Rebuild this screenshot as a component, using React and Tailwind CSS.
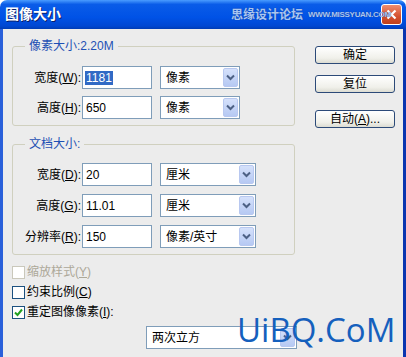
import React from "react";

const font = "font-['Liberation_Sans','Noto_Sans_CJK_SC',sans-serif]";

const Chevron = () => (
  <svg width="9" height="7" viewBox="0 0 9 7" aria-hidden="true">
    <path d="M1 1.5 L4.5 5 L8 1.5" fill="none" stroke="#4d6185" strokeWidth="2" />
  </svg>
);

const Select = ({ width, value }) => (
  <div className={`flex h-[23px] items-center border border-[#7f9db9] bg-white ${width}`}>
    <span className="flex-1 pl-[5px] text-[12px] leading-none text-black">{value}</span>
    <div className="mr-[1px] flex h-[19px] w-[15px] items-center justify-center rounded-[2px] border border-[#b8c8f0] bg-[linear-gradient(to_bottom,#d5e1fb,#b6c9f3)]">
      <Chevron />
    </div>
  </div>
);

const Label = ({ text, keyChar }) => (
  <span className="w-[68px] whitespace-nowrap text-right text-[12px] text-black">
    {text}(<span className="underline">{keyChar}</span>):
  </span>
);

const Row = ({ text, keyChar, value, unit, selectWidth, selected }) => (
  <div className="flex items-center">
    <Label text={text} keyChar={keyChar} />
    <div className="ml-[1px] flex h-[23px] w-[70px] items-center border border-[#7f9db9] bg-white pl-[2px] text-[12px] text-black">
      {selected ? (
        <span className="bg-[#316ac5] px-[1px] leading-[14px] text-white">{value}</span>
      ) : (
        <span className="px-[1px]">{value}</span>
      )}
    </div>
    <div className="ml-[8px]">
      <Select width={selectWidth} value={unit} />
    </div>
  </div>
);

const Group = ({ title, className, children }) => (
  <fieldset className={`w-[283px] rounded-[3px] border border-[#d0d0bf] ${className}`}>
    <legend className="ml-[12px] px-[4px] text-[12px] leading-[14px] text-[#1e50b4]">{title}</legend>
    {children}
  </fieldset>
);

const Button = ({ children, className }) => (
  <button
    type="button"
    className={`flex h-[18px] w-[80px] items-center justify-center rounded-[3px] border border-[#2c4a78] bg-[linear-gradient(to_bottom,#ffffff,#f0f0ea_70%,#dcdcd2)] text-[12px] leading-none text-black ${className}`}
  >
    {children}
  </button>
);

const Check = ({ label, keyChar, checked, disabled, colon }) => (
  <div className="flex h-[20px] items-center">
    <div
      className={`flex h-[13px] w-[13px] items-center justify-center border bg-white ${
        disabled ? "border-[#cac8bb]" : "border-[#1c5180]"
      }`}
    >
      {checked && (
        <svg width="9" height="9" viewBox="0 0 9 9" aria-hidden="true">
          <path d="M1 4.5 L3.5 7 L8 1.5" fill="none" stroke="#21a121" strokeWidth="2" />
        </svg>
      )}
    </div>
    <span className={`ml-[2px] text-[12px] ${disabled ? "text-[#aca899]" : "text-black"}`}>
      {label}(<span className="underline">{keyChar}</span>){colon ? ":" : ""}
    </span>
  </div>
);

export default function App() {
  return (
    <div className={`flex h-[357px] w-[406px] flex-col overflow-hidden ${font}`}>
      <div className="relative flex h-[29px] w-[406px] shrink-0 items-center rounded-t-[7px] bg-[linear-gradient(to_bottom,#4a9cff_0%,#0a5ce8_15%,#0052e6_60%,#0047d2_90%,#003cb4_100%)] pl-[5px] pr-[4px]">
        <span className="text-[14px] font-bold text-white [text-shadow:1px_1px_0_#0a1e6a]">图像大小</span>
        {/* close button */}
        <div className="ml-auto flex h-[21px] w-[21px] shrink-0 items-center justify-center rounded-[3px] border border-white bg-[linear-gradient(to_bottom,#ee8d6f,#d4512e_60%,#c0401c)]">
          <svg width="11" height="11" viewBox="0 0 11 11" aria-hidden="true">
            <path d="M1.5 1.5 L9.5 9.5 M9.5 1.5 L1.5 9.5" stroke="#ffffff" strokeWidth="2.2" />
          </svg>
        </div>
        {/* site watermark drawn over the bar */}
        <span className="absolute left-[231px] top-[8px] z-10 text-[12px] font-bold leading-[14px] text-[#a9c6f2] [text-shadow:0_0_1px_#1b3a8a]">
          思缘设计论坛
        </span>
        <span className="absolute left-[308px] top-[10px] z-10 whitespace-nowrap text-[8px] font-bold leading-[10px] tracking-[-0.3px] text-[#a9c6f2] [text-shadow:0_0_1px_#1b3a8a]">
          WWW.MISSYUAN.COM
        </span>
      </div>

      <div className="relative flex flex-1 border-l-[3px] border-r-[3px] border-l-[#2a60da] border-r-[#0a35b0] bg-[#ececec]">
        <div className="flex flex-col pl-[9px] pt-[10px]">
          <Group title="像素大小:2.20M" className="pb-[6px] pt-[13px]">
            <div className="flex flex-col gap-[7px]">
              <Row text="宽度" keyChar="W" value="1181" unit="像素" selectWidth="w-[80px]" selected />
              <Row text="高度" keyChar="H" value="650" unit="像素" selectWidth="w-[80px]" />
            </div>
          </Group>

          <Group title="文档大小:" className="mt-[11px] pb-[6px] pt-[12px]">
            <div className="flex flex-col gap-[8px]">
              <Row text="宽度" keyChar="D" value="20" unit="厘米" selectWidth="w-[96px]" />
              <Row text="高度" keyChar="G" value="11.01" unit="厘米" selectWidth="w-[96px]" />
              <Row text="分辨率" keyChar="R" value="150" unit="像素/英寸" selectWidth="w-[96px]" />
            </div>
          </Group>

          <div className="mt-[7px] flex flex-col">
            <Check label="缩放样式" keyChar="Y" disabled />
            <Check label="约束比例" keyChar="C" />
            <Check label="重定图像像素" keyChar="I" checked colon />
          </div>

          <div className="ml-[134px] mt-[4px]">
            <Select width="w-[151px]" value="两次立方" />
          </div>
        </div>

        <div className="ml-[18px] flex flex-col pt-[17px]">
          <Button>确定</Button>
          <Button className="mt-[11px]">复位</Button>
          <Button className="mt-[17px]">
            自动(<span className="underline">A</span>)...
          </Button>
        </div>

        <span className="absolute left-[234px] top-[281px] font-['Open_Sans',sans-serif] text-[33px] leading-[40px] text-[#1560bd]">
          UiBQ.CoM
        </span>
      </div>
    </div>
  );
}
